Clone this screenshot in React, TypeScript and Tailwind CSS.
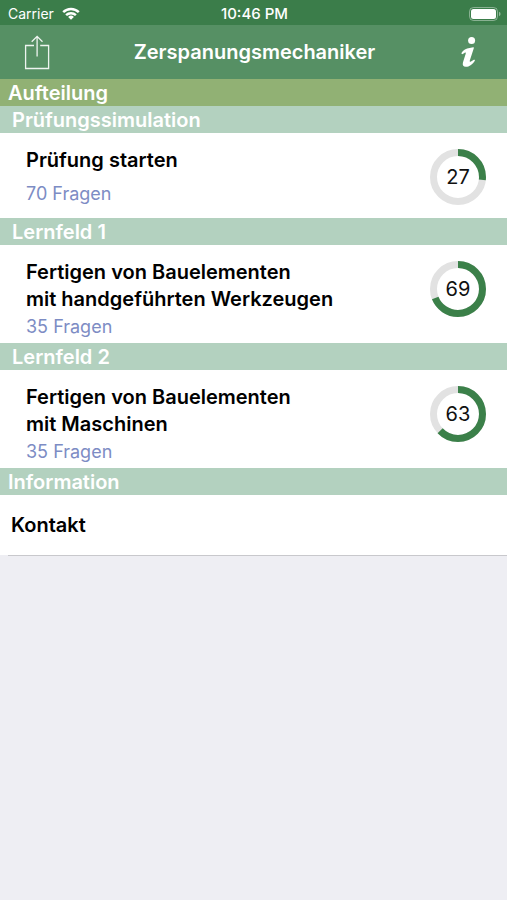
type Topic = {
  section: string;
  title: string[];
  questions: number;
  progress: number;
};

const topics: Topic[] = [
  { section: "Prüfungssimulation", title: ["Prüfung starten"], questions: 70, progress: 27 },
  {
    section: "Lernfeld 1",
    title: ["Fertigen von Bauelementen", "mit handgeführten Werkzeugen"],
    questions: 35,
    progress: 69,
  },
  {
    section: "Lernfeld 2",
    title: ["Fertigen von Bauelementen", "mit Maschinen"],
    questions: 35,
    progress: 63,
  },
];

function WifiIcon() {
  return (
    <svg viewBox="0 0 18 13" className="w-[18px] h-[13px]" aria-hidden="true">
      <g fill="none" stroke="currentColor" strokeWidth="2.5">
        <path d="M1.2 5.1a11.2 11.2 0 0 1 15.6 0" />
        <path d="M4.1 8.2a7.1 7.1 0 0 1 9.8 0" />
      </g>
      <path d="M9 12.8 6.1 9.9a4.2 4.2 0 0 1 5.8 0z" fill="currentColor" />
    </svg>
  );
}

function BatteryIcon() {
  return (
    <svg viewBox="0 0 32 14" className="w-8 h-[14px]" aria-hidden="true">
      <rect x="0.5" y="0.5" width="28" height="13" rx="4" fill="none" stroke="#fff" strokeOpacity="0.4" />
      <rect x="2" y="2" width="25" height="10" rx="2.5" fill="#fff" />
      <path d="M30 4.8q1.6.6 1.6 2.2T30 9.2z" fill="#fff" fillOpacity="0.45" />
    </svg>
  );
}

function ShareIcon() {
  return (
    <svg viewBox="0 0 26 36" className="w-[26px] h-9" fill="none" stroke="currentColor" strokeOpacity="0.9" strokeWidth="1.3" aria-hidden="true">
      <path d="M10 11.5H1.6v23H24.6v-23H16.2" />
      <path d="M13.1 22.5V2.4M7.7 7.8l5.4-5.4 5.4 5.4" />
    </svg>
  );
}

function InfoIcon() {
  return (
    <svg viewBox="0 0 16 32" className="w-4 h-8" fill="currentColor" aria-hidden="true">
      <circle cx="10.6" cy="4.6" r="3.5" />
      <path d="M.3 17.2C2.3 13.9 5.2 12.2 8.6 11.9L12.2 11.2C12.8 11.1 13 11.5 12.8 12.2L8.8 24.4C8.5 25.6 9.1 26 10 25.4L13.2 23.4L14 24.4C12 28 8.4 30.8 4.8 30.8C2.2 30.8 1.2 29 2 26.2L4.7 17.8C5 16.7 4.4 16.3 3.5 16.9L1.2 18.3Z" />
    </svg>
  );
}

function StatusBar() {
  return (
    <div className="h-[25px] pl-2 pr-1.5 pt-0.5 grid grid-cols-3 items-center bg-[#3b7d4a] text-white text-sm">
      <div className="flex items-center gap-2">
        <span>Carrier</span>
        <WifiIcon />
      </div>
      <div className="text-center text-[15px] leading-5 font-medium">10:46 PM</div>
      <div className="flex justify-end">
        <BatteryIcon />
      </div>
    </div>
  );
}

function NavBar() {
  return (
    <header className="h-[54px] px-6 flex items-center justify-between bg-[#569064] text-white">
      <button type="button" aria-label="Teilen" className="pr-1">
        <ShareIcon />
      </button>
      <h1 className="text-xl font-semibold">Zerspanungsmechaniker</h1>
      <button type="button" aria-label="Info" className="px-1.5">
        <InfoIcon />
      </button>
    </header>
  );
}

function ProgressRing({ value }: { value: number }) {
  return (
    <svg viewBox="0 0 56 56" className="w-14 h-14" role="img" aria-label={`${value} %`}>
      <g fill="none" strokeWidth="7" transform="rotate(-90 28 28)">
        <circle cx="28" cy="28" r="24.5" stroke="#e2e2e2" />
        <circle cx="28" cy="28" r="24.5" stroke="#3b8049" pathLength="100" strokeDasharray={`${value} 100`} />
      </g>
      <text x="28" y="35" textAnchor="middle" fontSize="20" fill="#111">
        {value}
      </text>
    </svg>
  );
}

function TopicRow({ topic }: { topic: Topic }) {
  const single = topic.title.length === 1;
  return (
    <section>
      <h3 className="pl-3 pt-0.5 bg-[#b3d1bf] text-white text-xl leading-[25px] font-semibold">{topic.section}</h3>
      <a href="#" className="flex items-start justify-between pl-[26px] pr-[21px] bg-white">
        <div className={single ? "pt-3.5 pb-3" : "pt-3.5 pb-1"}>
          <div className="text-xl leading-[27px] font-semibold text-black">
            {topic.title.map((line) => (
              <div key={line}>{line}</div>
            ))}
          </div>
          <div className={single ? "pt-2 text-lg leading-6 text-[#7d8cc4]" : "pt-0.5 text-lg leading-6 text-[#7d8cc4]"}>
            {topic.questions} Fragen
          </div>
        </div>
        <div className="pt-4">
          <ProgressRing value={topic.progress} />
        </div>
      </a>
    </section>
  );
}

export default function App() {
  return (
    <div className="min-h-screen bg-[#eeeef3] font-['Inter',sans-serif]">
      <StatusBar />
      <NavBar />
      <main>
        <h2 className="pl-2 pt-0.5 bg-[#91b174] text-white text-xl leading-[25px] font-semibold">Aufteilung</h2>
        {topics.map((topic) => (
          <TopicRow key={topic.section} topic={topic} />
        ))}
        <section>
          <h3 className="pl-2 pt-0.5 bg-[#b3d1bf] text-white text-xl leading-[25px] font-semibold">Information</h3>
          <a href="#" className="block pl-[11px] bg-white text-black text-xl leading-[60px] font-semibold">
            Kontakt
          </a>
          <div className="ml-2 h-px bg-[#c8c8cc]" />
        </section>
      </main>
    </div>
  );
}
